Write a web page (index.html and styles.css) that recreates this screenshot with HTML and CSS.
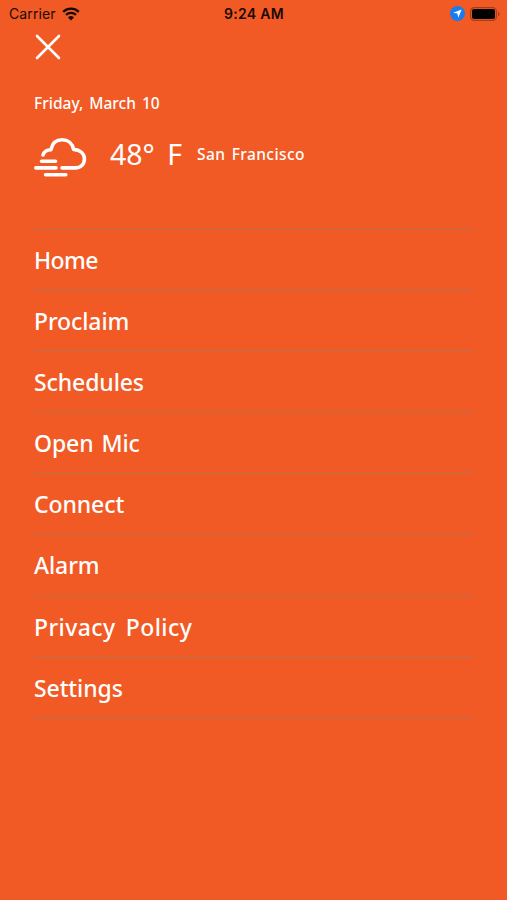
FILE: index.html
```html
<!DOCTYPE html>
<html lang="en">
<head>
    <meta charset="UTF-8">
    <meta name="viewport" content="width=device-width, initial-scale=1.0">
    <title>Menu</title>
    <link rel="stylesheet" href="styles.css">
</head>
<body>
    <header class="status-bar">
        <div class="carrier">
            <span>Carrier</span>
            <svg class="wifi" viewBox="0 0 18 14" width="18" height="14">
                <path d="M1.2 4.8a11.2 11.2 0 0 1 15.6 0M4 7.9a7.2 7.2 0 0 1 10 0" fill="none" stroke="#1a0903" stroke-width="2.3"/>
                <path d="M9 13.5 6 10.5a4.3 4.3 0 0 1 6 0z" fill="#1a0903"/>
            </svg>
        </div>
        <div class="time">9:24 AM</div>
        <div class="indicators">
            <svg viewBox="0 0 16 16" width="15" height="15">
                <circle cx="8" cy="8" r="8" fill="#187bef"/>
                <path d="M12.4 3.6 8.8 12.5 7.9 8.1 3.4 7.3z" fill="#fff"/>
            </svg>
            <svg viewBox="0 0 30 14" width="30" height="14">
                <rect x=".6" y=".6" width="25.8" height="12.8" rx="3.6" fill="none" stroke="#a63d17" stroke-width="1.2"/>
                <rect x="2" y="2" width="23" height="10" rx="2" fill="#000"/>
                <path d="M28 4.6c2 .8 2 4 0 4.8z" fill="#a63d17"/>
            </svg>
        </div>
    </header>

    <main class="menu">
        <button class="close" aria-label="Close">
            <svg viewBox="0 0 26 26" width="26" height="26">
                <path d="M2 2l22 22M24 2L2 24" stroke="#fff" stroke-width="2.6" stroke-linecap="round"/>
            </svg>
        </button>

        <div class="date">Friday, March 10</div>
        <div class="weather">
            <svg class="cloud" viewBox="0 0 54 40" width="54" height="40" fill="none" stroke="#fff" stroke-width="3.6" stroke-linecap="round" stroke-linejoin="round">
                <path d="M9 18C10 14.8 13 12.8 17 12.7C18.2 6.4 22.4 2.8 28.2 2.8C34 2.8 38.4 6.4 39.6 12.4C46 12.8 50.4 16.5 50.4 22C50.4 27.4 46.6 30.9 41 30.9H28"/>
                <path d="M7.5 24.2H21.5M1.8 30.9H22M11.6 37.8H31.8"/>
            </svg>
            <span class="temp">48° F</span>
            <span class="city">San Francisco</span>
        </div>

        <nav>
            <ul class="links">
                <li class="tight">Home</li>
                <li>Proclaim</li>
                <li>Schedules</li>
                <li>Open Mic</li>
                <li>Connect</li>
                <li>Alarm</li>
                <li class="wide">Privacy Policy</li>
                <li>Settings</li>
            </ul>
        </nav>
    </main>
</body>
</html>
```
FILE: styles.css
```css
* {
    box-sizing: border-box;
}
body {
    margin: 0;
    height: 900px;
    overflow: hidden;
    background-color: #f15a24;
    color: #fff;
    font-family: "Noto Sans", sans-serif;
}
.status-bar {
    display: grid;
    grid-template-columns: 1fr auto 1fr;
    align-items: center;
    height: 27px;
    padding: 0 7px 0 9px;
    color: #1a0903;
    font-family: Inter, sans-serif;
    font-size: 14px;
}
.carrier {
    display: flex;
    align-items: center;
    gap: 6px;
    letter-spacing: 0.1px;
}
.time {
    padding-right: 1px;
    font-weight: 600;
    letter-spacing: 0.3px;
}
.indicators {
    display: flex;
    align-items: center;
    justify-content: flex-end;
    gap: 5px;
}
.menu {
    padding: 7px 33px 0 34px;
}
.close {
    display: block;
    height: 26px;
    padding: 0 1px;
    border: none;
    background: none;
}
.close svg {
    display: block;
}
.date {
    margin-top: 32px;
    font-size: 15.5px;
    font-weight: 500;
    line-height: 22px;
    word-spacing: 2px;
}
.weather {
    display: flex;
    align-items: center;
    height: 40px;
    margin-top: 23px;
}
.temp {
    margin: -6px 0 0 22px;
    font-size: 28.5px;
    word-spacing: 5px;
}
.city {
    margin: -6px 0 0 15px;
    font-size: 15.5px;
    font-weight: 500;
    letter-spacing: 0.4px;
    word-spacing: 2px;
}
.links {
    list-style: none;
    margin: 51px 0 0;
    padding: 0;
    border-top: 2px solid #d5663c;
}
.links li {
    height: 61.1px;
    border-bottom: 2px solid #d5663c;
    font-size: 23px;
    font-weight: 500;
    line-height: 60px;
    word-spacing: 2px;
    letter-spacing: -0.1px;
}
.links .tight {
    letter-spacing: -0.6px;
}
.links .wide {
    letter-spacing: 0.4px;
    word-spacing: 4px;
}
```
